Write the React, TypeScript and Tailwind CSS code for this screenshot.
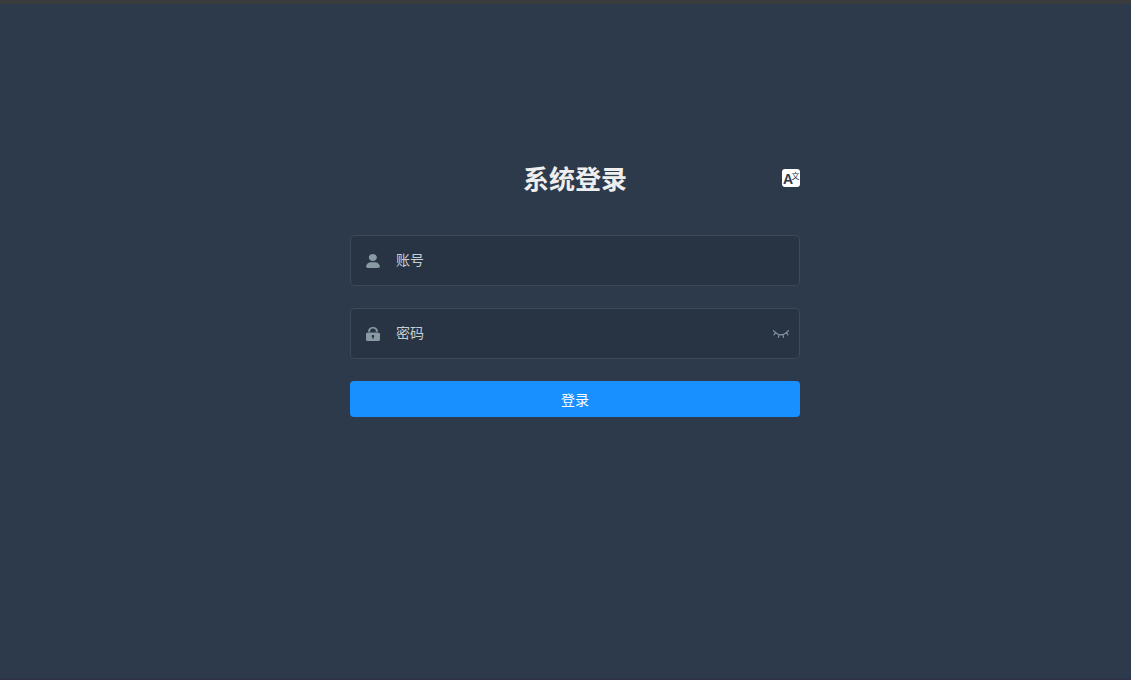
import { useState } from 'react';

function UserIcon() {
  return (
    <svg className="w-3.5 h-3.5" viewBox="0 0 130 130" fill="currentColor" aria-hidden="true">
      <path d="M63.444 64.996c20.633 0 37.359-14.308 37.359-31.953 0-17.649-16.726-31.952-37.359-31.952-20.631 0-37.36 14.303-37.36 31.952 0 17.645 16.729 31.953 37.36 31.953zM80.57 75.65H49.434c-26.652 0-48.26 18.477-48.26 41.27v2.664c0 9.316 21.608 9.325 48.26 9.325H80.57c26.649 0 48.256-.344 48.256-9.325v-2.663c0-22.794-21.605-41.271-48.256-41.271z" />
    </svg>
  );
}

function LockIcon() {
  return (
    <svg className="w-3.5 h-3.5" viewBox="0 0 128 128" fill="currentColor" aria-hidden="true">
      <path d="M108.8 44.322H89.6v-5.36c0-9.04-3.308-24.163-25.6-24.163-23.145 0-25.6 16.881-25.6 24.162v5.361H19.2v-5.36C19.2 15.281 36.798 0 64 0c27.202 0 44.8 15.281 44.8 38.961v5.361zm-32 39.356c0-5.44-5.763-9.832-12.8-9.832-7.037 0-12.8 4.392-12.8 9.832 0 3.682 2.567 6.808 6.407 8.477v11.205c0 2.718 2.875 4.962 6.4 4.962 3.524 0 6.4-2.244 6.4-4.962V92.155c3.833-1.669 6.393-4.795 6.393-8.477zM128 64v49.201c0 8.158-8.645 14.799-19.2 14.799H19.2C8.651 128 0 121.359 0 113.201V64c0-8.153 8.645-14.799 19.2-14.799h89.6c10.555 0 19.2 6.646 19.2 14.799z" />
    </svg>
  );
}

function ClosedEyeIcon() {
  return (
    <svg className="w-4 h-4" viewBox="0 -32 128 128" fill="currentColor" aria-hidden="true">
      <path d="M127.072 7.994c1.37-2.208.914-5.152-.914-6.87-2.056-1.717-4.797-1.226-6.396.982-.229.245-25.586 32.382-55.74 32.382-29.24 0-55.74-32.382-55.968-32.627-1.6-1.963-4.57-2.208-6.397-.49C-.17 3.086-.399 6.275 1.2 8.238c.457.736 5.94 7.36 14.62 14.72L4.17 35.96c-1.828 1.963-1.6 5.152.228 6.87.457.98 1.6 1.471 2.742 1.471s2.284-.49 3.198-1.472l12.564-13.983c5.94 4.416 13.021 8.587 20.788 11.53l-4.797 17.418c-.685 2.699.686 5.397 3.198 6.133h1.37c2.057 0 3.884-1.472 4.341-3.68L52.6 42.83c3.655.736 7.538 1.227 11.422 1.227 3.883 0 7.767-.49 11.422-1.227l4.797 17.173c.457 2.208 2.513 3.68 4.34 3.68.457 0 .914 0 1.143-.246 2.513-.736 3.883-3.434 3.198-6.133l-4.797-17.172c7.767-2.944 14.848-7.114 20.788-11.53l12.336 13.738c.913.981 2.056 1.472 3.198 1.472s2.284-.49 3.199-1.472c1.828-1.963 1.828-4.906.228-6.87l-11.65-13.001c9.366-7.36 14.849-14.474 14.849-14.474z" />
    </svg>
  );
}

function LanguageIcon() {
  return (
    <svg className="w-[18px] h-[18px]" viewBox="0 0 18 18" aria-hidden="true">
      <rect width="18" height="18" rx="3" fill="#fff" />
      <text x="1" y="15" fontSize="14" fontWeight="700" fill="#2d3a4b" fontFamily="Liberation Sans, sans-serif">A</text>
      <text x="9.5" y="10" fontSize="8" fill="#2d3a4b" fontFamily="Noto Sans CJK SC, sans-serif">文</text>
    </svg>
  );
}

const fieldClass =
  'flex items-center h-[51px] rounded-[5px] border border-white/10 bg-black/10 pl-[15px] pr-2.5 text-[#889aa4]';
const inputClass =
  'flex-1 min-w-0 h-full ml-4 pb-1 bg-transparent text-sm text-white outline-none placeholder:text-[#c9ccd1]';

export default function App() {
  const [showPassword, setShowPassword] = useState(false);

  return (
    <div className="min-h-screen flex flex-col bg-[#2d3a4b] border-t-4 border-b-2 border-t-[#3c3c3c] border-b-[#30324a] pl-[19px] font-['Noto_Sans_CJK_SC',sans-serif]">
      <form
        className="w-full max-w-[520px] mx-auto px-[35px] pt-[154px]"
        onSubmit={(e) => e.preventDefault()}
      >
        <div className="grid grid-cols-[1fr_auto_1fr] items-center mb-[37px]">
          <h1 className="col-start-2 text-[26px] leading-10 font-bold text-[#eee]">系统登录</h1>
          <button type="button" className="justify-self-end cursor-pointer" aria-label="Language">
            <LanguageIcon />
          </button>
        </div>

        <div className="flex flex-col gap-[22px]">
          <div className={fieldClass}>
            <label htmlFor="username" aria-label="账号">
              <UserIcon />
            </label>
            <input id="username" type="text" placeholder="账号" autoComplete="username" className={inputClass} />
          </div>

          <div className={fieldClass}>
            <label htmlFor="password" aria-label="密码">
              <LockIcon />
            </label>
            <input
              id="password"
              type={showPassword ? 'text' : 'password'}
              placeholder="密码"
              autoComplete="current-password"
              className={inputClass}
            />
            <button
              type="button"
              className="cursor-pointer"
              aria-label="Toggle password"
              onClick={() => setShowPassword(!showPassword)}
            >
              <ClosedEyeIcon />
            </button>
          </div>

          <button type="submit" className="w-full h-9 rounded bg-[#1890ff] text-sm text-white cursor-pointer">
            登录
          </button>
        </div>
      </form>
    </div>
  );
}
